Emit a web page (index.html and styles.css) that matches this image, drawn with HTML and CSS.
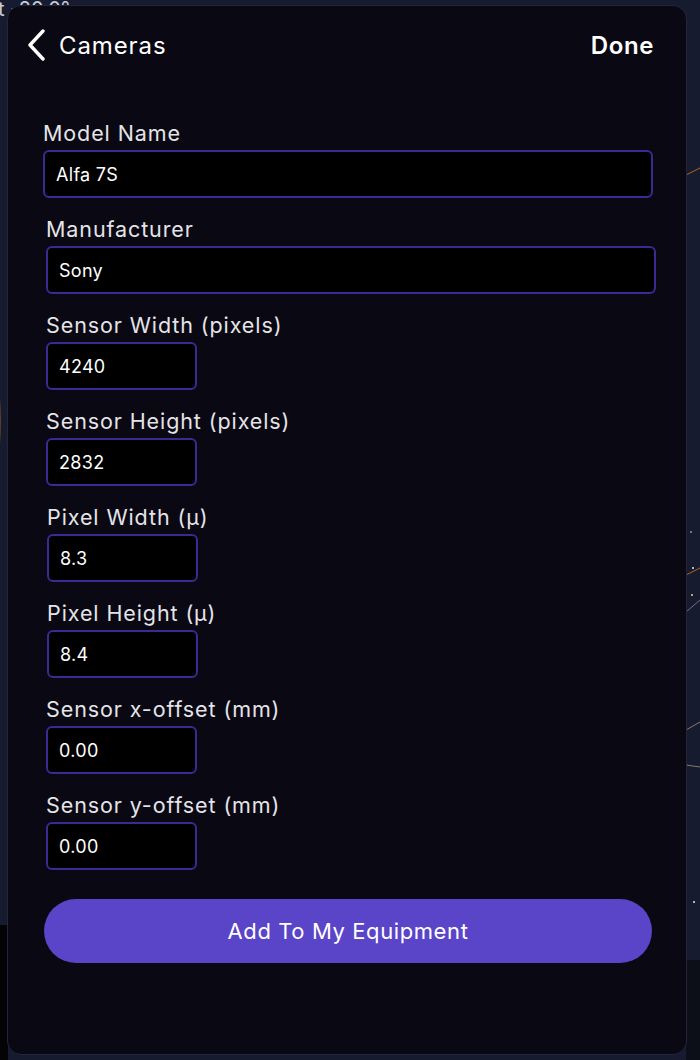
FILE: index.html
```html
<!DOCTYPE html>
<html lang="en">
    <head>
        <meta charset="UTF-8">
        <meta name="viewport" content="width=device-width, initial-scale=1.0">
        <title>Cameras</title>
        <link rel="stylesheet" href="styles.css">
    </head>
    <body>
        <!-- star map behind the sheet -->
        <svg class="mapa" width="700" height="1060" viewBox="0 0 700 1060">
            <rect x="0" y="0" width="700" height="1060" fill="#161b30"/>
            <rect x="0" y="925" width="8" height="135" fill="#040406"/>
            <rect x="686" y="960" width="14" height="100" fill="#0d0f18"/>
            <path d="M-20 300 Q 6 360 -2 470" stroke="#b8631c" stroke-width="1.2" fill="none"/>
            <path d="M686 575 L700 568" stroke="#b8631c" stroke-width="1"/>
            <path d="M686 612 L700 600" stroke="#6b7080" stroke-width="1"/>
            <path d="M686 730 L700 722" stroke="#8a7a60" stroke-width="1"/>
            <path d="M686 765 L700 767" stroke="#8a7a60" stroke-width="1"/>
            <path d="M686 175 L700 168" stroke="#b8631c" stroke-width="1"/>
            <circle cx="693" cy="568" r="1" fill="#dfe6ff"/>
            <circle cx="692" cy="595" r="1" fill="#e8d880"/>
            <circle cx="694" cy="902" r="1" fill="#dfe6ff"/>
            <circle cx="691" cy="532" r="0.8" fill="#dfe6ff"/>
            <text x="-2" y="16" fill="#c8ccd8" font-size="20" font-family="Inter, sans-serif">t -20.0°</text>
        </svg>

        <div class="hoja">
            <div class="cabecera">
                <div class="volver">
                    <svg width="20" height="32" viewBox="0 0 20 32">
                        <path d="M17 2 L4 16 L17 30" stroke="#fff" stroke-width="3.4" fill="none" stroke-linecap="round" stroke-linejoin="round"/>
                    </svg>
                    <span>Cameras</span>
                </div>
                <span class="listo">Done</span>
            </div>

            <form class="formulario">
                <div class="campo izq">
                    <label>Model Name</label>
                    <div class="entrada ancha">Alfa 7S</div>
                </div>
                <div class="campo">
                    <label>Manufacturer</label>
                    <div class="entrada ancha">Sony</div>
                </div>
                <div class="campo">
                    <label>Sensor Width (pixels)</label>
                    <div class="entrada">4240</div>
                </div>
                <div class="campo">
                    <label>Sensor Height (pixels)</label>
                    <div class="entrada">2832</div>
                </div>
                <div class="campo der">
                    <label>Pixel Width (µ)</label>
                    <div class="entrada">8.3</div>
                </div>
                <div class="campo der">
                    <label>Pixel Height (µ)</label>
                    <div class="entrada">8.4</div>
                </div>
                <div class="campo">
                    <label>Sensor x-offset (mm)</label>
                    <div class="entrada">0.00</div>
                </div>
                <div class="campo">
                    <label>Sensor y-offset (mm)</label>
                    <div class="entrada">0.00</div>
                </div>

                <button type="button" class="agregar">Add To My Equipment</button>
            </form>
        </div>
    </body>
</html>
```

FILE: styles.css
```css
html, body {
    height: 100%;
}

body {
    margin: 0;
    padding: 0;
    position: relative;
    background: #161b30;
    overflow: hidden;
    font-family: Inter, 'Noto Sans', sans-serif;
    color: #fff;
}

.mapa {
    position: absolute;
    top: 0;
    left: 0;
}

.hoja {
    position: relative;
    margin: 5px 13px 0 7px;
    height: 1050px;
    box-sizing: border-box;
    background: #0a0813;
    border: 1px solid #23253a;
    border-radius: 14px;
}

.cabecera {
    display: flex;
    justify-content: space-between;
    align-items: center;
    height: 78px;
    padding: 0 32px 0 18px;
}

.volver {
    display: flex;
    align-items: center;
    gap: 13px;
    font-size: 24px;
    letter-spacing: 0.9px;
}

.volver svg {
    display: block;
}

.listo {
    font-size: 24px;
    font-weight: 600;
    letter-spacing: 0.6px;
}

.formulario {
    padding: 34px 0 0 38px;
}

.campo {
    display: flex;
    flex-direction: column;
    gap: 2px;
    margin-bottom: 16px;
}

.campo.izq {
    margin-left: -3px;
}

.campo.der {
    margin-left: 1px;
}

.campo label {
    font-size: 21.5px;
    line-height: 30px;
    letter-spacing: 0.9px;
    color: #e4e4e8;
}

.entrada {
    width: 151px;
    height: 48px;
    box-sizing: border-box;
    padding: 0 11px;
    display: flex;
    align-items: center;
    background: #000;
    border: 2px solid #3a2a94;
    border-radius: 6px;
    font-size: 18px;
    letter-spacing: 0.3px;
}

.entrada.ancha {
    width: 610px;
}

.agregar {
    margin: 13px 0 0 -2px;
    width: 608px;
    height: 64px;
    border: none;
    border-radius: 32px;
    background: #5a44c8;
    color: #fff;
    font-family: Inter, 'Noto Sans', sans-serif;
    font-size: 22px;
    letter-spacing: 0.6px;
    cursor: pointer;
}
```
